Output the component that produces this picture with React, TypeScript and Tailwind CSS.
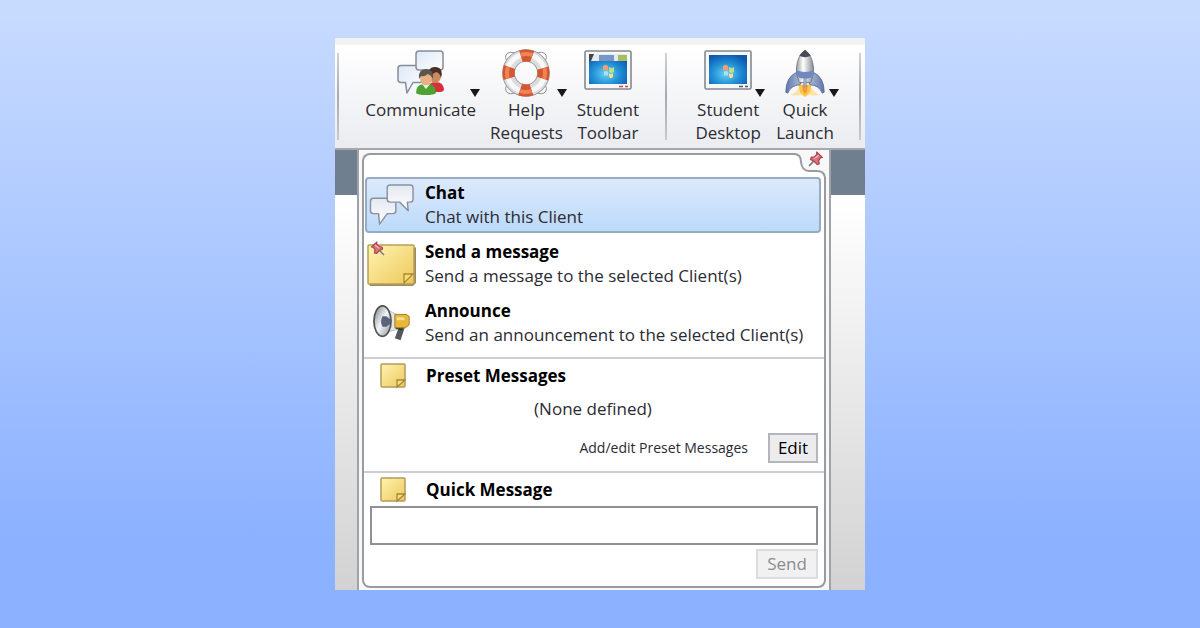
import type { ReactNode } from 'react';

function ChatBubbles({ className }: { className?: string }) {
  return (
    <svg viewBox="0 0 48 46" className={className} aria-hidden="true">
      <defs>
        <linearGradient id="bubble" x1="0" y1="0" x2="0" y2="1">
          <stop offset="0" stopColor="#e3e8f2" />
          <stop offset="1" stopColor="#ffffff" />
        </linearGradient>
      </defs>
      <g fill="url(#bubble)" stroke="#8b919c" strokeWidth="1.5" strokeLinejoin="round">
        <path d="M4.500 16H25q3 0 3 3v10q0 3-3 3H19l-8 11-1-11H4.500q-3 0-3-3V19q0-3 3-3z" />
        <path d="M22 2h21q3 0 3 3v12q0 3-3 3h-3l1 9-9-9H22q-3 0-3-3V5q0-3 3-3z" />
      </g>
    </svg>
  );
}

function CommunicateIcon() {
  return (
    <svg viewBox="0 0 48 48" className="h-12 w-12" aria-hidden="true">
      <defs>
        <linearGradient id="talk" x1="0" y1="0" x2="1" y2="1">
          <stop offset="0" stopColor="#dce8f8" />
          <stop offset="1" stopColor="#ffffff" />
        </linearGradient>
      </defs>
      <g fill="url(#talk)" stroke="#868c98" strokeWidth="1.5" strokeLinejoin="round">
        <path d="M4 16.500H23q3 0 3 3v11q0 3-3 3H16L10 44 8.500 33.500H4q-3 0-3-3v-11q0-3 3-3z" />
        <path d="M22 2H43q3 0 3 3v13q0 3-3 3H22q-3 0-3-3V5q0-3 3-3z" />
      </g>
      <path d="M31 43q-1-9 6-10 9-1 10 7 0 3-4 3z" fill="#d8303a" />
      <ellipse cx="38" cy="27" rx="6" ry="7" fill="#c98c60" />
      <path d="M31 27q0-10 8-9 8 1 5 11-1-5-5-6-4 3-8 4z" fill="#4a2f22" />
      <path d="M19 44q0-8 7-9h6q7 1 7 9-2 2-10 2t-10-2z" fill="#4ba333" />
      <path d="M25 35l4 5 4-5z" fill="#f3f5e6" />
      <ellipse cx="29" cy="29" rx="6" ry="7.500" fill="#e6b184" />
      <path d="M22 30q-1-10 7-10 8 0 7 10-2-4-5-5-4 3-7 2z" fill="#5a554e" />
    </svg>
  );
}

function LifebuoyIcon() {
  return (
    <svg viewBox="0 0 48 48" className="h-12 w-12" aria-hidden="true">
      <g fill="none" stroke="#8e9297" strokeWidth="1">
        <path d="M9 13q-7-1-5-7Q7 1 15 5M33 5q8-4 11 1 2 6-5 7M9 35q-7 1-5 7 3 5 11 1M33 43q8 4 11-1 2-6-5-7" />
      </g>
      <circle cx="24" cy="24" r="17.500" fill="none" stroke="#8d8d8f" strokeWidth="12.500" />
      <circle cx="24" cy="24" r="17.500" fill="none" stroke="#dcdcdf" strokeWidth="11" />
      <circle cx="24" cy="24" r="18.500" fill="none" stroke="#f8f8f8" strokeWidth="5" />
      <circle
        cx="24"
        cy="24"
        r="17.500"
        fill="none"
        stroke="#d3582f"
        strokeWidth="12"
        strokeDasharray="11.490 16"
        strokeDashoffset="5.745"
      />
      <circle
        cx="24"
        cy="24"
        r="19"
        fill="none"
        stroke="#ee8259"
        strokeWidth="4"
        strokeDasharray="11.845 18"
        strokeDashoffset="5.922"
      />
    </svg>
  );
}

function ScreenIcon({ toolbar = false }: { toolbar?: boolean }) {
  return (
    <svg viewBox="0 0 48 48" className="h-12 w-12" aria-hidden="true">
      <defs>
        <radialGradient id="sky" cx="0.45" cy="0.65" r="0.7">
          <stop offset="0" stopColor="#6fd0f3" />
          <stop offset="0.5" stopColor="#2392d8" />
          <stop offset="1" stopColor="#0c58ad" />
        </radialGradient>
      </defs>
      <rect x="1" y="2" width="46" height="38" rx="1.500" fill="#f6f7f9" stroke="#83898f" strokeWidth="1.600" />
      <rect x="5" y="6" width="38" height="29" fill="url(#sky)" />
      {toolbar && (
        <>
          <rect x="5" y="5" width="38" height="7" fill="#e6eaf0" />
          <path d="M5 5h5l-3 7H5z" fill="#3f4650" />
          <rect x="15" y="6" width="15" height="6" fill="#7897c4" />
          <rect x="34" y="6" width="9" height="6" fill="#a7bd62" />
        </>
      )}
      <path d="M19 17q3-2 5 0v5q-2-2-5 0z" fill="#f0a070" />
      <path d="M25 18q3 2 5 0v5q-2 2-5 0z" fill="#c0dc84" />
      <path d="M20 23q2-2 4 0v4q-2-2-4 0z" fill="#a8e0f6" />
      <path d="M25 24q2 2 4 0v4q-2 2-4 0z" fill="#f8e08a" />
      <path d="M35 37.500h4M41 37.500h3" stroke={toolbar ? '#d4424b' : '#50565e'} strokeWidth="1.500" />
    </svg>
  );
}

function RocketIcon() {
  return (
    <svg viewBox="0 0 48 50" className="h-12 w-12" aria-hidden="true">
      <defs>
        <linearGradient id="hull" x1="0" y1="0" x2="1" y2="0">
          <stop offset="0" stopColor="#9a9ea6" />
          <stop offset="0.400" stopColor="#ffffff" />
          <stop offset="1" stopColor="#858a94" />
        </linearGradient>
        <linearGradient id="fin" x1="0" y1="0" x2="1" y2="0">
          <stop offset="0" stopColor="#5c74a8" />
          <stop offset="0.500" stopColor="#c5d2ea" />
          <stop offset="1" stopColor="#5c74a8" />
        </linearGradient>
      </defs>
      <path d="M9 48q7-3 8-7l7-3 7 3q2 4 8 7-5 1-11 0l-4 2-4-2q-6 1-11 0z" fill="#fce2a0" />
      <path d="M17 37h14l-2 8-5 5-5-5z" fill="#fbc44c" />
      <path d="M21 38h6l-1 6-2 3-2-3z" fill="#f49a34" />
      <path d="M16 24Q4 29 4 45l2 1q3-8 13-9l2-5zM32 24q12 5 12 21l-2 1q-3-8-13-9l-2-5z" fill="url(#fin)" stroke="#61719a" />
      <path d="M24 1q8 6 9 20 0 7-3 14H18q-3-7-3-14Q16 7 24 1z" fill="url(#hull)" stroke="#747982" />
      <path d="M24 1q-4 3-6 6 6 3 12 0-2-3-6-6z" fill="#484c54" />
      <path d="M15 22q9 4 18 0l-1 7q-8 4-16 0z" fill="#6f89bf" />
      <path d="M23 30h2v9q-1 2-2 0z" fill="#d7dfef" stroke="#6c7da3" />
    </svg>
  );
}

function PinShape() {
  return (
    <g>
      <path d="M5 10L1 14" stroke="#777b80" strokeWidth="1.500" />
      <path
        d="M8 1l5.500 5-2 .500L10 9l.500 3-2 .500L6 10 2.500 8 3 6l3-.500L8.500 3z"
        fill="#d8737b"
        stroke="#a8434e"
        strokeWidth="1.200"
        strokeLinejoin="round"
      />
      <path d="M6 7l4-3" stroke="#f6b8bb" strokeWidth="1.200" />
    </g>
  );
}

function NoteIcon({ pinned = false, className }: { pinned?: boolean; className?: string }) {
  return (
    <svg viewBox={pinned ? '0 0 50 46' : '0 0 26 26'} className={className} aria-hidden="true">
      <defs>
        <linearGradient id="paper" x1="0" y1="0" x2="1" y2="1">
          <stop offset="0" stopColor="#fff3b0" />
          <stop offset="1" stopColor="#edc95c" />
        </linearGradient>
      </defs>
      {pinned ? (
        <>
          <path d="M2 42l1 3h43l3-3V6z" fill="#9a8b67" />
          <rect x="1" y="4" width="46" height="39" rx="1" fill="url(#paper)" stroke="#b89f58" strokeWidth="1.500" />
          <path d="M37 42v-9h9z" fill="#f9dc78" stroke="#a98732" strokeWidth="1.300" />
          <g transform="translate(18 0) scale(-1 1)">
            <PinShape />
          </g>
        </>
      ) : (
        <>
          <rect x="1" y="1" width="24" height="23" rx="1" fill="url(#paper)" stroke="#b39b5b" strokeWidth="1.500" />
          <path d="M17 24v-7h8z" fill="#f5dc86" stroke="#a98732" strokeWidth="1.300" />
        </>
      )}
    </svg>
  );
}

function MegaphoneIcon() {
  return (
    <svg viewBox="0 0 40 42" className="h-10 w-10" aria-hidden="true">
      <defs>
        <linearGradient id="cone" x1="0" y1="0" x2="1" y2="1">
          <stop offset="0" stopColor="#777b80" />
          <stop offset="0.500" stopColor="#f4f5f6" />
          <stop offset="1" stopColor="#8e9297" />
        </linearGradient>
      </defs>
      <path d="M11 5l14 7v16l-13 3z" fill="#e3e5e7" stroke="#b9bcc0" />
      <path d="M28 23l6 1-5 15-6-2z" fill="#55575b" />
      <path d="M24 26l7 2" stroke="#303236" strokeWidth="2" />
      <path d="M23 12h12l3 2v9l-4 3H23z" fill="#e8b83a" stroke="#a37b21" />
      <path d="M25 15h8v3h-8z" fill="#fbe28c" />
      <ellipse cx="10" cy="19" rx="9" ry="16" fill="url(#cone)" stroke="#505358" strokeWidth="1.800" />
      <path d="M10 14h4l4 3v5l-4 3h-4q-3-5 0-11z" fill="#5a647c" />
    </svg>
  );
}

interface ToolProps {
  lines: string[];
  icon: ReactNode;
  menu?: boolean;
}

function ToolButton({ lines, icon, menu }: ToolProps) {
  return (
    <button type="button" className="flex flex-col items-stretch gap-px">
      <span className="grid grid-cols-[1fr_auto_1fr] items-end">
        <span />
        {icon}
        {menu && (
          <svg viewBox="0 0 10 8" className="h-2 w-2.5 justify-self-end" aria-hidden="true">
            <path d="M0 0h10L5 8z" fill="#17171b" />
          </svg>
        )}
      </span>
      <span className="px-1 text-center leading-[23px]">
        {lines.map((line) => (
          <span key={line} className="block">
            {line}
          </span>
        ))}
      </span>
    </button>
  );
}

function Separator() {
  return <span className="my-1 w-0.5 shrink-0 bg-linear-to-b from-[#d0d1d4] via-[#a8aaae] to-[#c8c9cc]" />;
}

interface ActionProps {
  title: string;
  text: string;
  icon: ReactNode;
  selected?: boolean;
}

function ActionRow({ title, text, icon, selected }: ActionProps) {
  return (
    <button
      type="button"
      className={
        'flex h-14 w-full items-center rounded-sm border-2 text-left ' +
        (selected
          ? 'border-[#97abc2] bg-linear-to-b from-[#dce9fc] to-[#bcdafa]'
          : 'border-transparent')
      }
    >
      <span className="flex w-[50px] shrink-0 justify-center">{icon}</span>
      <span className="ml-2 leading-6">
        <span className="block font-bold text-black">{title}</span>
        <span className="block">{text}</span>
      </span>
    </button>
  );
}

export default function App() {
  return (
    <div className="flex min-h-screen flex-col items-center bg-linear-to-b from-[#c9dcff] to-[#8cb1ff] to-85% py-[38px] font-['Open_Sans','Noto_Sans',sans-serif] text-[17px] text-[#2b2b33]">
      <main className="flex w-full max-w-[530px] flex-1 flex-col overflow-hidden bg-white">
        <div className="h-[7px] bg-[#f2f2f3]" />
        <header className="flex h-[105px] border-b-2 border-[#a5a9ae] bg-linear-to-b from-white to-[#ebecf0] px-0.5 pt-1 pb-1">
          <Separator />
          <div className="flex flex-1 items-start justify-center gap-1.5">
            <ToolButton lines={['Communicate']} icon={<CommunicateIcon />} menu />
            <ToolButton lines={['Help', 'Requests']} icon={<LifebuoyIcon />} menu />
            <ToolButton lines={['Student', 'Toolbar']} icon={<ScreenIcon toolbar />} />
          </div>
          <Separator />
          <div className="flex items-start justify-center gap-1.5 pr-5 pl-6">
            <ToolButton lines={['Student', 'Desktop']} icon={<ScreenIcon />} menu />
            <ToolButton lines={['Quick', 'Launch']} icon={<RocketIcon />} menu />
          </div>
          <Separator />
          <span className="w-0.5" />
        </header>

        <div className="flex flex-1 bg-[linear-gradient(#6f7f90_45px,#fff_45px,#fff_50px,#d2d2d2)]">
          <section className="mr-[34px] ml-[22px] flex flex-1 flex-col border-x-2 border-[#a0a2a5] bg-[#f8f8f9] px-[3px] pt-[3px] pb-0.5">
            <div className="relative flex h-6">
              <div className="flex-1 rounded-tl-lg border-t-2 border-l-2 border-[#999c9f] bg-white" />
              <svg viewBox="0 0 34 24" className="h-6 w-[34px]" aria-hidden="true">
                <path d="M0 1h2q7 0 7 8 1 9 8 9h8q8 0 8 6H0z" fill="#fff" />
                <path d="M0 1h2q7 0 7 8 1 9 8 9h8q8 0 8 8" fill="none" stroke="#999c9f" strokeWidth="2" />
              </svg>
              <button type="button" aria-label="Pin" className="absolute -top-0.5 right-0.5">
                <svg viewBox="0 0 15 15" className="h-4 w-4" aria-hidden="true">
                  <PinShape />
                </svg>
              </button>
            </div>

            <div className="flex flex-1 flex-col rounded-b-lg border-x-2 border-b-2 border-[#999c9f] bg-white">
              <div className="flex flex-col gap-[3px] pr-[3px] pl-px">
                <ActionRow
                  title="Chat"
                  text="Chat with this Client"
                  icon={<ChatBubbles className="h-11 w-12" />}
                  selected
                />
                <ActionRow
                  title="Send a message"
                  text="Send a message to the selected Client(s)"
                  icon={<NoteIcon pinned className="h-[46px] w-[50px]" />}
                />
                <ActionRow
                  title="Announce"
                  text="Send an announcement to the selected Client(s)"
                  icon={<MegaphoneIcon />}
                />
              </div>

              <div className="mt-1.5 border-t-2 border-[#cdced0] pr-1.5 pl-4">
                <div className="flex h-[34px] items-center gap-5">
                  <NoteIcon className="h-[26px] w-[26px]" />
                  <h2 className="font-bold text-black">Preset Messages</h2>
                </div>
                <p className="h-8 pr-3 text-center leading-8">(None defined)</p>
                <div className="mt-2 flex items-center justify-end gap-5">
                  <span className="text-sm">Add/edit Preset Messages</span>
                  <button
                    type="button"
                    className="h-[30px] w-[50px] border-2 border-[#b4b6ba] bg-[#ececee] leading-6 text-black"
                  >
                    Edit
                  </button>
                </div>
              </div>

              <div className="mt-2 border-t-2 border-[#cdced0] px-1.5">
                <div className="flex h-[33px] items-center gap-5 pl-2.5">
                  <NoteIcon className="h-[26px] w-[26px]" />
                  <label htmlFor="quick-message" className="font-bold text-black">
                    Quick Message
                  </label>
                </div>
                <input
                  id="quick-message"
                  type="text"
                  className="block h-[39px] w-full border-2 border-[#909193] bg-white px-2 outline-none"
                />
                <div className="mt-1 flex justify-end">
                  <button
                    type="button"
                    disabled
                    className="h-[30px] w-[62px] border-2 border-[#dcdcde] bg-[#f1f1f2] leading-6 text-[#8a8b8e]"
                  >
                    Send
                  </button>
                </div>
              </div>
            </div>
          </section>
        </div>
      </main>
    </div>
  );
}
